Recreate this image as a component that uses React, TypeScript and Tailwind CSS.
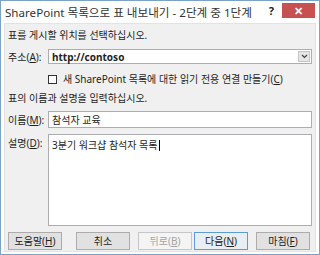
import * as React from "react"

// ── Dialog button ─────────────────────────────────────────────────────────────

interface DlgButtonProps {
  label: string
  accel?: string
  variant?: "normal" | "disabled" | "focus"
  className?: string
}

function DlgButton({ label, accel, variant = "normal", className = "" }: DlgButtonProps) {
  const tone =
    variant === "disabled"
      ? "bg-[#f4f4f4] border-[#c6c6c6] text-[#a3a3a3]"
      : variant === "focus"
        ? "bg-[#e8eef4] border-[#5d9bd3] text-[#222]"
        : "bg-[#e1e1e1] border-[#acacac] text-[#222]"
  return (
    <div
      className={`flex h-[18px] w-[54px] shrink-0 items-center justify-center border text-[10px] leading-none ${tone} ${className}`}
    >
      <span>
        {label}
        {accel && (
          <>
            (<u>{accel}</u>)
          </>
        )}
      </span>
    </div>
  )
}

// ── App ───────────────────────────────────────────────────────────────────────

export default function App() {
  return (
    <div
      className="flex h-[255px] w-[320px] flex-col overflow-hidden border border-[#7ba3c6] bg-white text-[#1e1e1e]"
      style={{ fontFamily: '"Noto Sans", "Noto Sans CJK KR", sans-serif' }}
    >
      {/* title bar */}
      <div className="flex h-[22px] shrink-0 items-start">
        <div className="pl-[4px] pt-[4px] text-[11.6px] leading-[15px] whitespace-nowrap text-[#333]">
          SharePoint 목록으로 표 내보내기 - 2단계 중 1단계
        </div>
        <div className="ml-auto mr-[4px] flex items-start">
          <div className="pt-[3px] pr-[8px] text-[11px] font-bold leading-[14px] text-[#222]">?</div>
          <div className="mt-[2px] flex h-[15px] w-[33px] items-center justify-center bg-[#c75050] text-[11px] font-bold leading-none text-white">
            ✕
          </div>
        </div>
      </div>

      {/* client area */}
      <div className="mx-[3px] mb-[2px] flex min-h-0 flex-1 flex-col border border-[#e3e3e3] bg-[#f0f0f0] px-[3px] text-[10px] leading-[12px]">
        <div className="mt-[5px]">표를 게시할 위치를 선택하십시오.</div>

        <div className="mt-[8px] flex items-center">
          <div className="w-[40px]">
            주소(<u>A</u>):
          </div>
          <div className="flex h-[15px] flex-1 items-center border border-[#abadb3] bg-white">
            <span className="pl-[3px] font-bold">http://contoso</span>
            <div className="ml-auto mr-[1px] flex h-[11px] w-[12px] items-center justify-center border border-[#c5c5c5] bg-[#e6e6e6]">
              <svg width="7" height="5" viewBox="0 0 7 5">
                <path d="M1 1 L3.5 3.5 L6 1" fill="none" stroke="#444" strokeWidth="1.2" />
              </svg>
            </div>
          </div>
        </div>

        <div className="mt-[9px] flex items-center pl-[40px]">
          <div className="h-[9px] w-[9px] border border-[#333] bg-white" />
          <div className="ml-[6px]">
            새 SharePoint 목록에 대한 읽기 전용 연결 만들기(<u>C</u>)
          </div>
        </div>

        <div className="mt-[7px]">표의 이름과 설명을 입력하십시오.</div>

        <div className="mt-[7px] flex items-center">
          <div className="w-[40px]">
            이름(<u>M</u>):
          </div>
          <div className="flex h-[17px] flex-1 items-center border border-[#abadb3] bg-white pl-[3px]">
            참석자 교육
          </div>
        </div>

        <div className="mt-[6px] flex items-start">
          <div className="w-[40px] pt-[3px]">
            설명(<u>D</u>):
          </div>
          <div className="h-[92px] flex-1 border border-[#abadb3] bg-white pl-[3px] pt-[3px]">
            3분기 워크샵 참석자 목록
            <span className="ml-[1px] inline-block h-[11px] w-px translate-y-[2px] bg-black" />
          </div>
        </div>

        <div className="mt-[6px] flex items-center">
          <DlgButton label="도움말" accel="H" />
          <DlgButton label="취소" className="ml-[14px]" />
          <DlgButton label="뒤로" accel="B" variant="disabled" className="ml-[8px]" />
          <DlgButton label="다음" accel="N" variant="focus" className="ml-[2px]" />
          <DlgButton label="마침" accel="F" className="ml-[8px]" />
        </div>
      </div>
    </div>
  )
}
